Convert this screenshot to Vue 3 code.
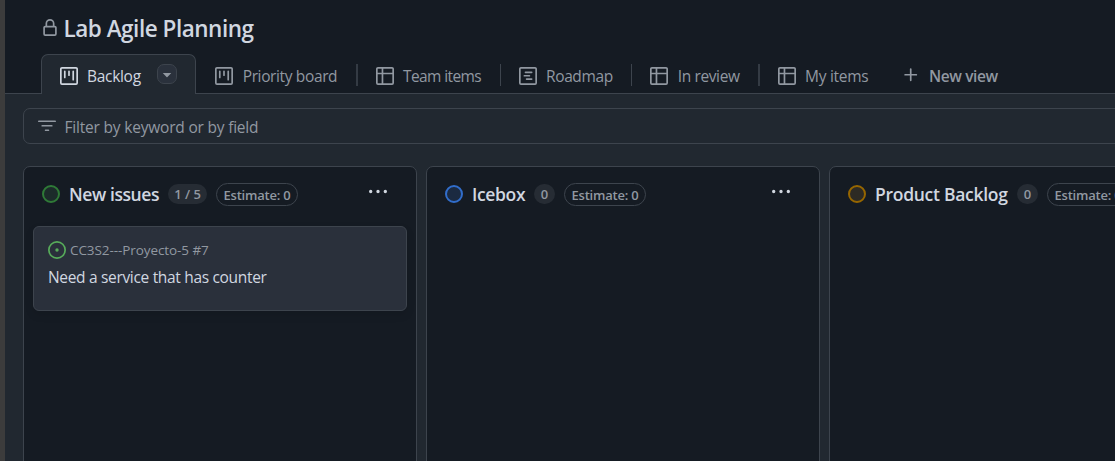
<script setup>
const tabs = [
  { name: 'Backlog', icon: 'board', width: 155, text: 55, ls: -0.3, active: true },
  { name: 'Priority board', icon: 'board', width: 161, text: 95, ls: -0.37, wide: true },
  { name: 'Team items', icon: 'table', width: 143, text: 79, ls: -0.6 },
  { name: 'Roadmap', icon: 'roadmap', width: 131, text: 67, ls: -0.38 },
  { name: 'In review', icon: 'table', width: 128, text: 63, ls: -0.37, wide: true },
  { name: 'My items', icon: 'table', width: 129, text: 64, ls: -0.28 },
]

const icons = {
  board:
    'M1.75 0h12.5C15.216 0 16 .784 16 1.75v12.5A1.75 1.75 0 0 1 14.25 16H1.75A1.75 1.75 0 0 1 0 14.25V1.75C0 .784.784 0 1.75 0ZM1.5 1.75v12.5c0 .138.112.25.25.25h12.5a.25.25 0 0 0 .25-.25V1.75a.25.25 0 0 0-.25-.25H1.75a.25.25 0 0 0-.25.25ZM11.75 3a.75.75 0 0 1 .75.75v7.5a.75.75 0 0 1-1.5 0v-7.5a.75.75 0 0 1 .75-.75Zm-8.25.75a.75.75 0 0 1 1.5 0v5.5a.75.75 0 0 1-1.5 0ZM8 3a.75.75 0 0 1 .75.75v3.5a.75.75 0 0 1-1.5 0v-3.5A.75.75 0 0 1 8 3Z',
  table:
    'M0 1.75C0 .784.784 0 1.75 0h12.5C15.216 0 16 .784 16 1.75v12.5A1.75 1.75 0 0 1 14.25 16H1.75A1.75 1.75 0 0 1 0 14.25ZM6.5 6.5v8h7.75a.25.25 0 0 0 .25-.25V6.5Zm8-1.5V1.75a.25.25 0 0 0-.25-.25H6.5V5Zm-13 1.5v7.75c0 .138.112.25.25.25H5v-8ZM5 5V1.5H1.75a.25.25 0 0 0-.25.25V5Z',
  roadmap:
    'M4.75 7a.75.75 0 0 0 0 1.5h4.5a.75.75 0 0 0 0-1.5h-4.5ZM5 4.75A.75.75 0 0 1 5.75 4h5.5a.75.75 0 0 1 0 1.5h-5.5A.75.75 0 0 1 5 4.75ZM6.75 10a.75.75 0 0 0 0 1.5h4.5a.75.75 0 0 0 0-1.5h-4.5ZM0 1.75C0 .784.784 0 1.75 0h12.5C15.216 0 16 .784 16 1.75v12.5A1.75 1.75 0 0 1 14.25 16H1.75A1.75 1.75 0 0 1 0 14.25Zm1.75-.25a.25.25 0 0 0-.25.25v12.5c0 .138.112.25.25.25h12.5a.25.25 0 0 0 .25-.25V1.75a.25.25 0 0 0-.25-.25Z',
}

const columns = [
  {
    name: 'New issues', tone: 'green', width: 90, ls: -0.42, count: '1 / 5', countWidth: 39,
    cards: [{ ref: 'CC3S2---Proyecto-5 #7', title: 'Need a service that has counter' }],
  },
  { name: 'Icebox', tone: 'blue', width: 53, ls: -0.35, count: '0', countWidth: 21, cards: [] },
  { name: 'Product Backlog', tone: 'amber', width: 133, ls: -0.28, count: '0', countWidth: 21, cards: [] },
]
</script>

<template>
  <div class="page">
    <header class="head">
      <h1 class="title">
        <svg class="lock" width="18" height="18" viewBox="0 0 16 16">
          <path d="M4 4a4 4 0 0 1 8 0v2h.25c.966 0 1.75.784 1.75 1.75v5.5A1.75 1.75 0 0 1 12.25 15h-8.5A1.75 1.75 0 0 1 2 13.25v-5.5C2 6.784 2.784 6 3.75 6H4Zm8.25 3.5h-8.5a.25.25 0 0 0-.25.25v5.5c0 .138.112.25.25.25h8.5a.25.25 0 0 0 .25-.25v-5.5a.25.25 0 0 0-.25-.25ZM10.5 6V4a2.5 2.5 0 1 0-5 0v2Z" />
        </svg>
        <span>Lab Agile Planning</span>
      </h1>
      <nav class="tabs">
        <a
          v-for="tab in tabs"
          :key="tab.name"
          class="tab"
          :class="{ active: tab.active, wide: tab.wide }"
          :style="{ width: tab.width + 'px' }"
        >
          <svg width="18" height="18" viewBox="0 0 16 16"><path :d="icons[tab.icon]" /></svg>
          <span
            class="label"
            :style="{ width: tab.text + 'px', letterSpacing: tab.ls + 'px' }"
          >{{ tab.name }}</span>
          <button v-if="tab.active" class="drop">
            <svg width="18" height="18" viewBox="0 0 16 16">
              <path d="m4.427 7.427 3.396 3.396a.25.25 0 0 0 .354 0l3.396-3.396A.25.25 0 0 0 11.396 7H4.604a.25.25 0 0 0-.177.427Z" />
            </svg>
          </button>
        </a>
        <a class="new-view">
          <svg width="18" height="18" viewBox="0 0 16 16">
            <path d="M7.75 2a.75.75 0 0 1 .75.75V7h4.25a.75.75 0 0 1 0 1.5H8.5v4.25a.75.75 0 0 1-1.5 0V8.5H2.75a.75.75 0 0 1 0-1.5H7V2.75A.75.75 0 0 1 7.75 2Z" />
          </svg>
          <span>New view</span>
        </a>
      </nav>
    </header>

    <div class="filter">
      <svg width="18" height="18" viewBox="0 0 16 16">
        <path d="M.75 3h14.5a.75.75 0 0 1 0 1.5H.75a.75.75 0 0 1 0-1.5ZM3 7.75A.75.75 0 0 1 3.75 7h8.5a.75.75 0 0 1 0 1.5h-8.5A.75.75 0 0 1 3 7.75Zm3 4a.75.75 0 0 1 .75-.75h2.5a.75.75 0 0 1 0 1.5h-2.5a.75.75 0 0 1-.75-.75Z" />
      </svg>
      <span>Filter by keyword or by field</span>
    </div>

    <main class="board">
      <section v-for="col in columns" :key="col.name" class="column">
        <div class="column-head">
          <i class="dot" :class="col.tone"></i>
          <h2 :style="{ width: col.width + 'px', letterSpacing: col.ls + 'px' }">{{ col.name }}</h2>
          <span class="count" :style="{ width: col.countWidth + 'px' }">{{ col.count }}</span>
          <span class="estimate">Estimate: 0</span>
          <svg class="more" width="18" height="18" viewBox="0 0 16 16">
            <path d="M8 9a1.5 1.5 0 1 0 0-3 1.5 1.5 0 0 0 0 3ZM1.5 9a1.5 1.5 0 1 0 0-3 1.5 1.5 0 0 0 0 3Zm13 0a1.5 1.5 0 1 0 0-3 1.5 1.5 0 0 0 0 3Z" />
          </svg>
        </div>
        <article v-for="card in col.cards" :key="card.ref" class="card">
          <div class="card-ref">
            <svg width="18" height="18" viewBox="0 0 16 16">
              <path d="M8 9.5a1.5 1.5 0 1 0 0-3 1.5 1.5 0 0 0 0 3Z" />
              <path d="M8 0a8 8 0 1 1 0 16A8 8 0 0 1 8 0ZM1.5 8a6.5 6.5 0 1 0 13 0 6.5 6.5 0 0 0-13 0Z" />
            </svg>
            <span>{{ card.ref }}</span>
          </div>
          <div class="card-title">{{ card.title }}</div>
        </article>
      </section>
    </main>
  </div>
</template>

<style>
html, body { margin: 0; background: #212830; overflow: hidden; }
</style>

<style scoped>
* { box-sizing: border-box; }
svg { display: block; flex: none; fill: currentColor; }
.page {
  width: 1115px;
  height: 461px;
  overflow: hidden;
  border-left: 5px solid #3c3c3c;
  background: #212830;
  color: #d1d7e0;
  font-family: "Open Sans", "Noto Sans", sans-serif;
  font-size: 15.5px;
  white-space: nowrap;
}
.head {
  height: 94px;
  background: #151b23;
  border-bottom: 1px solid #3d444d;
}
.title {
  display: flex;
  align-items: center;
  height: 54px;
  margin: 0;
  padding: 2px 0 0 36px;
  font-size: 22.5px;
  line-height: 30px;
  font-weight: 600;
  letter-spacing: -0.48px;
}
.title span { margin: 1px 0 0 -0.5px; }
.lock { color: #9198a1; margin-right: 5px; }
.tabs { display: flex; height: 40px; padding-left: 36px; color: #9198a1; }
.tab {
  position: relative;
  display: flex;
  flex: none;
  align-items: center;
  height: 40px;
  padding: 4px 0 0 19px;
}
.label { margin-left: 9px; line-height: 22px; }
.tab.wide .label { margin-left: 9.7px; }
.tab:not(.active)::after {
  content: "";
  position: absolute;
  right: -1px;
  top: 10px;
  width: 1px;
  height: 22px;
  background: #3d444d;
}
.tab.wide::after { width: 2px; background: #343b44; }
.tab:nth-child(6)::after { display: none; }
.tab.active {
  padding: 3px 0 0 18px;
  color: #d1d7e0;
  background: #212830;
  border: 1px solid #3d444d;
  border-bottom: 0;
  border-radius: 7px 7px 0 0;
}
.drop {
  display: flex;
  align-items: center;
  justify-content: center;
  width: 20px;
  height: 20px;
  margin: -4px 0 0 15px;
  padding: 0;
  color: #9198a1;
  background: #2a313c;
  border: 1px solid #3d444d;
  border-radius: 7px;
}
.new-view {
  display: flex;
  align-items: center;
  gap: 9px;
  padding: 2px 0 0 14px;
  font-weight: 600;
  letter-spacing: -0.4px;
}
.new-view span { margin-top: 2px; line-height: 22px; }
.filter {
  display: flex;
  align-items: center;
  gap: 9px;
  height: 36px;
  margin: 14px -10px 22px 18px;
  padding-left: 14px;
  border: 1px solid #3d444d;
  border-radius: 7px;
  color: #9198a1;
  letter-spacing: -0.2px;
}
.filter span { margin: 1px 0 0 -0.5px; line-height: 22px; }
.board { display: flex; gap: 9px; padding-left: 18px; }
.column {
  flex: none;
  width: 394px;
  height: 310px;
  padding: 0 9px;
  background: #151b23;
  border: 1px solid #3d444d;
  border-radius: 7px;
}
.column-head {
  display: flex;
  align-items: center;
  gap: 9px;
  height: 59px;
  padding: 0 20.5px 5px 9px;
}
.dot { flex: none; width: 18px; height: 18px; border: 2px solid; border-radius: 50%; }
.green { color: #2f7a37; background: #1c2b2a; }
.blue { color: #316dca; background: #1b2a41; }
.amber { color: #966600; background: #2d2a24; }
h2 { margin: 0; font-size: 17.5px; line-height: 24px; font-weight: 600; }
.count, .estimate {
  flex: none;
  color: #9198a1;
  font-size: 13px;
  font-weight: 600;
  text-align: center;
}
.count { height: 20px; line-height: 21px; border-radius: 10px; background: #262c34; }
.estimate {
  width: 82px;
  height: 23px;
  margin-top: 1px;
  line-height: 22px;
  border: 1px solid #3d444d;
  border-radius: 12px;
  letter-spacing: -0.22px;
}
.more { margin: -4px 0 0 auto; color: #d1d7e0; }
.card {
  height: 85px;
  padding: 14px;
  background: #2a303b;
  border: 1px solid #3d444d;
  border-radius: 6px;
  box-shadow: 0 4px 8px rgba(1, 4, 9, 0.1);
}
.card-ref {
  display: flex;
  align-items: center;
  gap: 4px;
  height: 18px;
  font-size: 13.5px;
  color: #9198a1;
  letter-spacing: -0.08px;
}
.card-ref svg { color: #57ab5a; }
.card-title { margin-top: 7px; line-height: 22px; letter-spacing: -0.32px; }
</style>
